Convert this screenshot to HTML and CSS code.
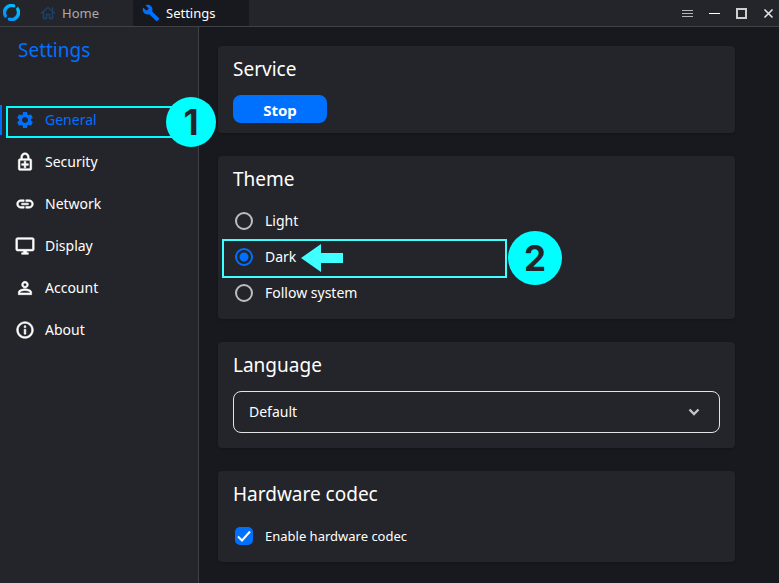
FILE: index.html
```html
<!DOCTYPE html>
<html lang="en">
<head>
    <meta charset="UTF-8">
    <meta name="viewport" content="width=device-width, initial-scale=1.0">
    <title>Settings</title>
    <link rel="stylesheet" href="styles.css">
</head>
<body>

<header class="titlebar">
    <svg class="logo" viewBox="0 0 18 18" aria-hidden="true">
        <defs>
            <linearGradient id="ring" x1="0" y1="1" x2="1" y2="0">
                <stop offset="0" stop-color="#0084ff"/>
                <stop offset="1" stop-color="#00d0ff"/>
            </linearGradient>
        </defs>
        <path fill="url(#ring)" d="M12.800 .9A8.900 8.900 0 0 0 2.300 15L4.300 13 3.800 11.200A5.800 5.800 0 0 1 11.200 3.700L13 3.300ZM15.700 3L13.700 5 14.200 6.800A5.800 5.800 0 0 1 6.800 14.300L5 14.700 5.200 17.100A8.900 8.900 0 0 0 15.700 3Z"/>
    </svg>
    <button type="button" class="tab">
        <svg class="tab-icon home" viewBox="0 0 16 16" aria-hidden="true">
            <path d="M1 8.500L8 2.500l7 6M3.500 7v6.500h3V9.500h3v4h3V7M12.500 6V2.500"/>
        </svg>
        Home
    </button>
    <button type="button" class="tab active">
        <svg class="tab-icon wrench" viewBox="0 0 24 24" aria-hidden="true">
            <path d="M22.7 19l-9.1-9.1c.9-2.3.4-5-1.5-6.9-2-2-5-2.4-7.4-1.3L9 6 6 9 1.6 4.7C.4 7.1.9 10.1 2.9 12.1c1.9 1.9 4.6 2.4 6.9 1.500l9.1 9.1c.4.4 1 .4 1.4 0l2.3-2.3c.5-.4.5-1.1.1-1.400z"/>
        </svg>
        Settings
    </button>
    <div class="window-controls">
        <button type="button" aria-label="Menu">
            <svg viewBox="0 0 11 11"><path class="thin" d="M0 2.500h11M0 5.500h11M0 8.500h11"/></svg>
        </button>
        <button type="button" aria-label="Minimize">
            <svg viewBox="0 0 11 11"><path d="M0 5.500h11"/></svg>
        </button>
        <button type="button" aria-label="Maximize">
            <svg viewBox="0 0 11 11"><path class="box" d="M1 1h9v9H1z"/></svg>
        </button>
        <button type="button" aria-label="Close">
            <svg viewBox="0 0 11 11"><path class="cross" d="M1.500 1.500l8 8M9.500 1.500l-8 8"/></svg>
        </button>
    </div>
</header>

<div class="layout">
    <aside class="sidebar">
        <h1 class="sidebar-title">Settings</h1>
        <nav class="menu">
            <a href="#general" class="menu-item active">
                <svg viewBox="0 0 24 24" aria-hidden="true"><path d="M19.14 12.94c.04-.3.06-.61.06-.94 0-.32-.02-.64-.07-.94l2.03-1.58c.18-.14.23-.41.12-.61l-1.92-3.32c-.12-.22-.37-.29-.59-.22l-2.39.96c-.5-.38-1.03-.7-1.62-.94l-.36-2.54c-.04-.24-.24-.41-.48-.41h-3.84c-.24 0-.43.17-.47.41l-.36 2.54c-.59.24-1.13.57-1.62.94l-2.39-.96c-.22-.08-.47 0-.59.22L2.74 8.87c-.12.21-.08.47.12.61l2.03 1.58c-.05.3-.09.63-.09.94s.02.64.07.94l-2.03 1.58c-.18.14-.23.41-.12.61l1.92 3.32c.12.22.37.29.59.22l2.39-.96c.5.38 1.03.7 1.62.94l.36 2.54c.05.24.24.41.48.41h3.84c.24 0 .44-.17.47-.41l.36-2.54c.59-.24 1.13-.56 1.62-.94l2.39.96c.22.08.47 0 .59-.22l1.92-3.32c.12-.22.07-.47-.12-.61l-2.01-1.58zM12 15.600c-1.98 0-3.600-1.620-3.600-3.600s1.620-3.600 3.600-3.600 3.600 1.620 3.600 3.600-1.620 3.600-3.600 3.600z"/></svg>
                General
                <span class="highlight highlight-menu"></span>
                <span class="step step-one">1</span>
            </a>
            <a href="#security" class="menu-item">
                <svg viewBox="0 0 24 24" aria-hidden="true"><path d="M18 8h-1V6c0-2.760-2.240-5-5-5S7 3.240 7 6v2H6c-1.100 0-2 .9-2 2v10c0 1.100.9 2 2 2h12c1.100 0 2-.9 2-2V10c0-1.100-.9-2-2-2zM9 6c0-1.660 1.340-3 3-3s3 1.340 3 3v2H9V6zm9 14H6V10h12v10zm-7-1h2v-3h3v-2h-3v-3h-2v3H8v2h3z"/></svg>
                Security
            </a>
            <a href="#network" class="menu-item">
                <svg viewBox="0 0 24 24" aria-hidden="true"><path d="M3.900 12c0-1.710 1.390-3.100 3.100-3.100h4V7H7c-2.760 0-5 2.240-5 5s2.240 5 5 5h4v-1.900H7c-1.710 0-3.100-1.390-3.100-3.100zM8 13h8v-2H8v2zm9-6h-4v1.900h4c1.710 0 3.100 1.390 3.100 3.100s-1.390 3.100-3.100 3.100h-4V17h4c2.760 0 5-2.240 5-5s-2.240-5-5-5z"/></svg>
                Network
            </a>
            <a href="#display" class="menu-item">
                <svg viewBox="0 0 24 24" aria-hidden="true"><path d="M21 2H3c-1.100 0-2 .9-2 2v12c0 1.100.9 2 2 2h7v2H8v2h8v-2h-2v-2h7c1.100 0 2-.9 2-2V4c0-1.100-.9-2-2-2zm0 14H3V4h18v12z"/></svg>
                Display
            </a>
            <a href="#account" class="menu-item">
                <svg viewBox="0 0 24 24" aria-hidden="true"><path d="M12 4C9.800 4 8 5.800 8 8s1.800 4 4 4 4-1.800 4-4-1.800-4-4-4zm0 2c1.100 0 2 .9 2 2s-.9 2-2 2-2-.9-2-2 .9-2 2-2zm0 7c-2.700 0-8 1.300-8 4v3h16v-3c0-2.700-5.300-4-8-4zm6 5H6v-1c0-.7 3.100-2 6-2s6 1.300 6 2z"/></svg>
                Account
            </a>
            <a href="#about" class="menu-item">
                <svg viewBox="0 0 24 24" aria-hidden="true"><path d="M11 7h2v2h-2zm0 4h2v6h-2zm1-9C6.480 2 2 6.480 2 12s4.480 10 10 10 10-4.480 10-10S17.520 2 12 2zm0 18c-4.410 0-8-3.590-8-8s3.590-8 8-8 8 3.590 8 8-3.590 8-8 8z"/></svg>
                About
            </a>
        </nav>
    </aside>

    <main class="content">
        <section class="card">
            <h2>Service</h2>
            <button type="button" class="stop">Stop</button>
        </section>

        <section class="card">
            <h2>Theme</h2>
            <div class="options">
                <div class="option">
                    <input type="radio" id="light" name="theme">
                    <label for="light">Light</label>
                </div>
                <div class="option">
                    <input type="radio" id="dark" name="theme" checked>
                    <label for="dark">Dark</label>
                    <span class="highlight highlight-option"></span>
                    <svg class="arrow" viewBox="0 0 42 28" aria-hidden="true"><path d="M0 14L20 0v9h22v10H20v9z"/></svg>
                    <span class="step step-two">2</span>
                </div>
                <div class="option">
                    <input type="radio" id="system" name="theme">
                    <label for="system">Follow system</label>
                </div>
            </div>
        </section>

        <section class="card">
            <h2><label for="language">Language</label></h2>
            <div class="dropdown">
                <select id="language">
                    <option>Default</option>
                </select>
                <svg class="chevron" viewBox="0 0 12 8" aria-hidden="true"><path d="M1.500 1.500L6 6l4.500-4.500"/></svg>
            </div>
        </section>

        <section class="card">
            <h2>Hardware codec</h2>
            <div class="options">
                <div class="option small">
                    <span class="check">
                        <input type="checkbox" id="codec" checked>
                        <svg viewBox="0 0 18 18" aria-hidden="true"><path d="M3 9.500L7 13.500 15 4.500"/></svg>
                    </span>
                    <label for="codec">Enable hardware codec</label>
                </div>
            </div>
        </section>
    </main>
</div>

</body>
</html>
```
FILE: styles.css
```css
* {
    margin: 0;
    padding: 0;
    box-sizing: border-box;
}

body {
    display: flex;
    flex-direction: column;
    min-height: 100vh;
    font-family: "Noto Sans", "Open Sans", sans-serif;
    font-size: 14px;
    line-height: 20px;
    color: #fff;
    background-color: #18191e;
}

button, select {
    font: inherit;
    color: inherit;
    border: none;
    background: none;
}

/* Title bar */
.titlebar {
    display: flex;
    height: 27px;
    padding-left: 3px;
    background-color: #24252b;
    border-bottom: 1px solid #404145;
}

.logo {
    width: 17px;
    height: 17px;
    margin: 4px 11px 0 0;
}

.tab {
    display: flex;
    align-items: center;
    gap: 6px;
    width: 102px;
    padding-left: 9px;
    font-size: 13px;
    color: #a9aaad;
}

.tab.active {
    width: 116px;
    color: #fff;
    background-color: #18191e;
}

.tab-icon {
    width: 16px;
    height: 16px;
}

.home {
    fill: none;
    stroke: #1b4168;
    stroke-width: 1.5;
}

.wrench {
    fill: #0071ff;
    width: 18px;
    height: 18px;
}

.window-controls {
    display: flex;
    align-items: center;
    gap: 16px;
    margin-left: auto;
    padding-right: 5px;
}

.window-controls svg {
    display: block;
    width: 11px;
    height: 11px;
    fill: none;
    stroke: #fff;
}

.window-controls .thin {
    stroke: #b5b5b7;
}

.window-controls .box {
    stroke: #cfcfd0;
    stroke-width: 2;
}

.window-controls .cross {
    stroke: #e4e4e5;
    stroke-width: 1.6;
}

/* Sidebar */
.layout {
    display: flex;
    flex: 1;
}

.sidebar {
    width: 199px;
    flex-shrink: 0;
    background-color: #24252b;
    border-right: 1px solid #404145;
}

.sidebar-title {
    padding: 10px 18px 36px;
    font-size: 19px;
    font-weight: normal;
    line-height: 26px;
    color: #0071ff;
}

.menu-item {
    position: relative;
    display: flex;
    align-items: center;
    gap: 10px;
    height: 42px;
    padding-left: 15px;
    color: #fff;
    text-decoration: none;
}

.menu-item svg {
    width: 20px;
    height: 20px;
    fill: currentColor;
    stroke: currentColor;
    stroke-width: 0.7;
}

.menu-item.active {
    color: #0071ff;
}

.menu-item.active svg {
    stroke: none;
}

.menu-item.active::before {
    content: "";
    position: absolute;
    left: 0;
    top: 6px;
    width: 2px;
    height: 30px;
    background-color: #0071ff;
}

/* Cards */
.content {
    display: flex;
    flex-direction: column;
    gap: 23px;
    flex: 1;
    padding: 19px 44px 19px 19px;
}

.card {
    padding: 10px 15px 8px;
    border-radius: 4px;
    background-color: #24252b;
    box-shadow: 0 1px 2px rgba(0, 0, 0, 0.2);
}

.card h2 {
    font-size: 19px;
    font-weight: normal;
    line-height: 26px;
}

.stop {
    display: block;
    width: 94px;
    height: 28px;
    margin: 13px 0 2px;
    padding-top: 2px;
    border-radius: 8px;
    font-size: 15px;
    font-weight: bold;
    background-color: #0071ff;
}

.options {
    margin-top: 11px;
}

.option {
    position: relative;
    display: flex;
    align-items: center;
    gap: 12px;
    height: 36px;
    padding-left: 2px;
}

.small {
    font-size: 13px;
}

.option input {
    display: block;
    appearance: none;
    width: 18px;
    height: 18px;
}

.option input[type="radio"] {
    border: 2px solid #bdbdbf;
    border-radius: 50%;
}

.option input[type="radio"]:checked {
    border-color: #0071ff;
    background: radial-gradient(circle, #0071ff 4px, transparent 5px);
}

.option input[type="checkbox"] {
    border-radius: 5px;
    background-color: #0071ff;
}

.check {
    position: relative;
}

.check svg {
    position: absolute;
    inset: 0;
    fill: none;
    stroke: #fff;
    stroke-width: 2;
    pointer-events: none;
}

.dropdown {
    position: relative;
    margin: 13px 0 7px;
}

.dropdown select {
    display: block;
    appearance: none;
    width: 100%;
    height: 42px;
    padding: 0 15px;
    border: 1px solid #e4e4e5;
    border-radius: 8px;
}

.chevron {
    position: absolute;
    right: 20px;
    top: 17px;
    width: 12px;
    height: 8px;
    fill: none;
    stroke: #c4c4c6;
    stroke-width: 2.4;
    pointer-events: none;
}

/* Step markers */
.highlight {
    position: absolute;
    border: 2px solid #00ffff;
}

.highlight-menu {
    left: 6px;
    right: 8px;
    top: 7px;
    height: 32px;
}

.highlight-option {
    left: -11px;
    top: 0;
    width: 285px;
    height: 39px;
    border-color: #40ffff;
    pointer-events: none;
}

.step {
    position: absolute;
    display: flex;
    align-items: center;
    justify-content: center;
    border-radius: 50%;
    font-family: Inter, sans-serif;
    font-size: 35px;
    font-weight: bold;
    color: #24252b;
    background-color: #00ffff;
}

.step-one {
    left: 166px;
    top: -2px;
    width: 50px;
    height: 50px;
}

.step-two {
    left: 275px;
    top: -8px;
    width: 54px;
    height: 54px;
}

.arrow {
    position: absolute;
    left: 68px;
    top: 5px;
    width: 42px;
    height: 28px;
    fill: #40ffff;
}
```
